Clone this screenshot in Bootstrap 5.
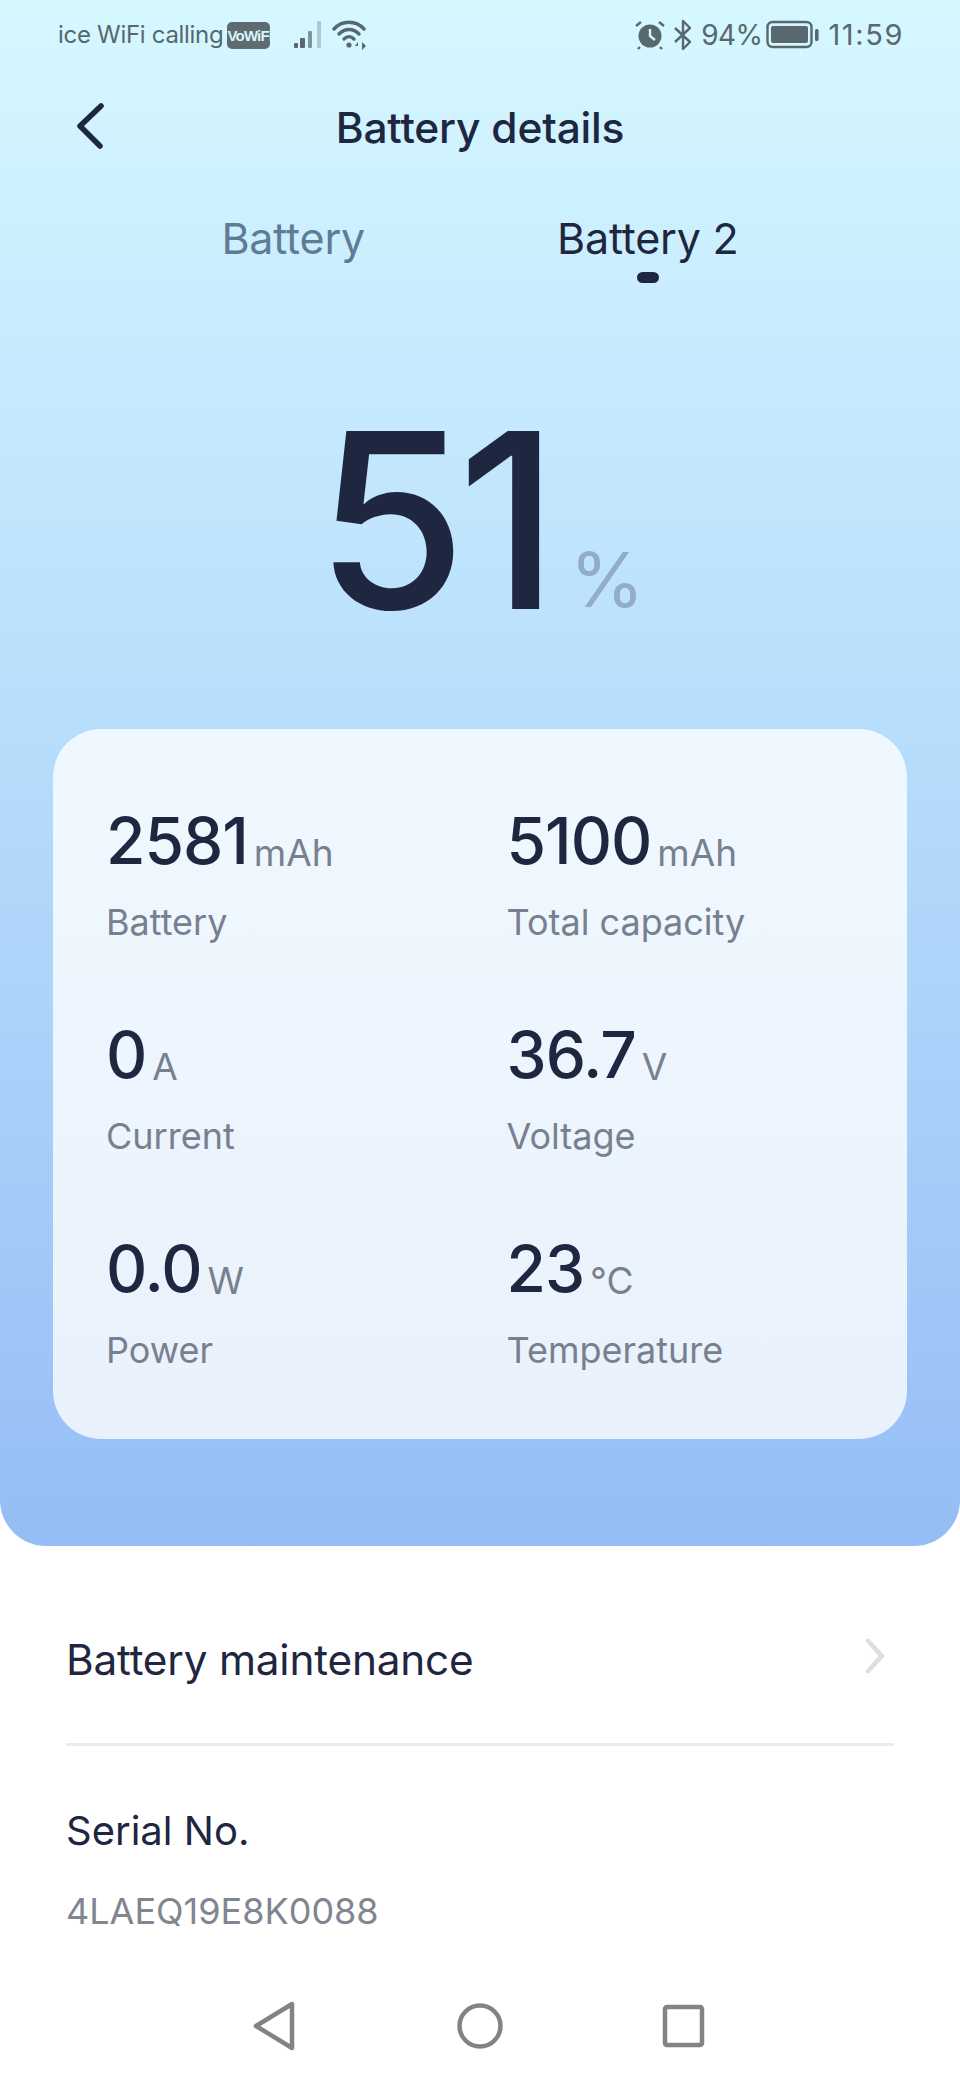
<!DOCTYPE html>
<html lang="en">
<head>
    <meta charset="UTF-8">
    <meta name="viewport" content="width=device-width, initial-scale=1.0">
    <title>Battery details</title>
    <link rel="stylesheet" href="https://cdn.jsdelivr.net/npm/bootstrap@5.3.0/dist/css/bootstrap.min.css">
    <style>
        body {
            font-family: Inter, "Noto Sans", sans-serif;
            background: #fff;
            color: #1e2640;
            width: 960px;
            height: 2080px;
            overflow: hidden;
        }
        .hero {
            height: 1546px;
            padding: 0 53px;
            background: linear-gradient(180deg, #d6f8ff 0%, #c6eafe 25%, #b5dcfb 50%, #a6cdf8 75%, #94bdf5 100%);
            border-radius: 0 0 46px 46px;
        }
        .status-bar {
            height: 70px;
            padding: 0 3px 0 5px;
            color: #58686e;
            font-size: 24px;
            letter-spacing: -.3px;
        }
        .status-big { font-size: 28px; letter-spacing: -.6px; }
        .status-time { font-size: 29px; letter-spacing: 1.6px; }
        .vowifi {
            background: #5e6b70;
            color: #d8f5fc;
            font: 700 15px/27px "Liberation Sans Narrow", "Liberation Sans", sans-serif;
            width: 43px;
            height: 27px;
            border-radius: 5px;
            text-align: center;
            letter-spacing: -.8px;
        }
        .title-bar { height: 118px; padding-bottom: 3px; }
        .title-bar h1 { font-size: 42.5px; font-weight: 500; margin: 0; letter-spacing: -.2px; }
        .back-btn { position: absolute; left: 22px; top: 33px; }
        .tabs { height: 100px; gap: 192px; }
        .tab-item { font-size: 43px; color: #5f7c96; position: relative; letter-spacing: -.2px; }
        .tab-item.active { color: #1e2640; }
        .tab-item.active::after {
            content: "";
            position: absolute;
            left: 50%;
            bottom: -13px;
            width: 22px;
            height: 11px;
            margin-left: -11px;
            border-radius: 6px;
            background: #1e2640;
        }
        .level { height: 441px; padding-bottom: 86px; }
        .level-num { font-size: 244px; font-weight: 450; line-height: 1; letter-spacing: -9px; }
        .level-unit { font-size: 76px; color: #93adc6; line-height: 1; margin-left: 20px; margin-bottom: 26px; }
        .stat-card {
            height: 710px;
            margin: 0;
            padding: 74px 0 0 53px;
            border: 0;
            border-radius: 48px;
            background: linear-gradient(180deg, #f0f8ff, #e9f2fc);
        }
        .stat-cell { height: 214px; }
        .stat-val { font-size: 64px; font-weight: 500; line-height: 76px; letter-spacing: -1px; }
        .stat-unit { font-size: 37px; font-weight: 400; color: #78808f; margin-left: 6px; letter-spacing: 0; position: relative; top: 2px; }
        .stat-label { font-size: 36px; line-height: 44px; color: #78808f; margin-top: 11px; }
        .info-list { padding: 0 66px; }
        .info-row { height: 200px; padding-top: 30px; border-bottom: 3px solid #e8eaec; font-size: 42.3px; letter-spacing: -.2px; }
        .serial { padding-top: 57px; }
        .serial-name { font-size: 40px; line-height: 56px; }
        .serial-no { font-size: 36px; line-height: 44px; color: #808590; margin-top: 30px; }
        .nav-bar { position: absolute; left: 0; right: 0; bottom: 28px; height: 52px; }
    </style>
</head>
<body>

    <div class="hero position-relative">
        <!-- status bar -->
        <div class="status-bar d-flex align-items-center justify-content-between">
            <div class="d-flex align-items-center">
                <span>ice WiFi calling</span>
                <span class="vowifi ms-1">VoWiFi</span>
                <svg class="ms-4" width="30" height="28" viewBox="0 0 30 28">
                    <rect x="0" y="22" width="4" height="5" rx="1" fill="#58686e"/>
                    <rect x="6" y="17" width="5" height="10" rx="1" fill="#58686e"/>
                    <rect x="14" y="10" width="4" height="17" rx="1" fill="#7f959d"/>
                    <rect x="23" y="0" width="4" height="27" rx="1" fill="#b0c8d0"/>
                </svg>
                <svg class="ms-2" width="36" height="30" viewBox="0 0 36 30" fill="none" stroke="#58686e" stroke-width="3.4" stroke-linecap="round">
                    <path d="M2 9C10 0 24 0 32 9"/>
                    <path d="M7 14C13 8 21 8 27 14"/>
                    <path d="M12 19C15 16 19 16 22 19"/>
                    <circle cx="17" cy="25" r="2.6" fill="#58686e" stroke="none"/>
                    <path d="M26 22l-3 4h3zM30 22v8l4-4z" fill="#58686e" stroke="none"/>
                </svg>
            </div>
            <div class="d-flex align-items-center">
                <svg width="30" height="30" viewBox="0 0 30 30">
                    <circle cx="15" cy="16" r="11.5" fill="#58686e"/>
                    <path d="M15 9v7l5 4" fill="none" stroke="#d4f5fd" stroke-width="2.4"/>
                    <path d="M1 6l5-4M29 6l-5-4M5 27l-2 2M25 27l2 2" stroke="#58686e" stroke-width="2.4"/>
                </svg>
                <svg class="ms-2" width="20" height="32" viewBox="0 0 20 32" fill="none" stroke="#58686e" stroke-width="2.4" stroke-linejoin="round">
                    <path d="M2 9l15 14-7 7V2l7 7L2 23"/>
                </svg>
                <span class="status-big ms-2">94%</span>
                <svg class="ms-1" width="54" height="30" viewBox="0 0 54 30">
                    <rect x="1.5" y="2" width="44" height="25" rx="5" fill="none" stroke="#58686e" stroke-width="2.4"/>
                    <rect x="5" y="6" width="37" height="17" rx="2" fill="#58686e"/>
                    <rect x="49" y="9" width="3.6" height="12" rx="1.6" fill="#58686e"/>
                </svg>
                <span class="status-time ms-2">11:59</span>
            </div>
        </div>

        <!-- title -->
        <div class="title-bar position-relative d-flex align-items-center justify-content-center">
            <svg class="back-btn" width="30" height="46" viewBox="0 0 30 46" fill="none" stroke="#1e2640" stroke-width="5.5" stroke-linecap="round" stroke-linejoin="round">
                <path d="M26 3L5 23l20 20"/>
            </svg>
            <h1>Battery details</h1>
        </div>

        <!-- tabs -->
        <div class="tabs d-flex align-items-center justify-content-center">
            <span class="tab-item">Battery</span>
            <span class="tab-item active">Battery 2</span>
        </div>

        <!-- level -->
        <div class="level d-flex justify-content-center align-items-end">
            <span class="level-num">51</span>
            <span class="level-unit">%</span>
        </div>

        <!-- stats -->
        <div class="card stat-card">
            <div class="row g-0">
                <div class="col-6 stat-cell">
                    <div class="stat-val">2581<span class="stat-unit">mAh</span></div>
                    <div class="stat-label">Battery</div>
                </div>
                <div class="col-6 stat-cell">
                    <div class="stat-val">5100<span class="stat-unit">mAh</span></div>
                    <div class="stat-label">Total capacity</div>
                </div>
                <div class="col-6 stat-cell">
                    <div class="stat-val">0<span class="stat-unit">A</span></div>
                    <div class="stat-label">Current</div>
                </div>
                <div class="col-6 stat-cell">
                    <div class="stat-val">36.7<span class="stat-unit">V</span></div>
                    <div class="stat-label">Voltage</div>
                </div>
                <div class="col-6 stat-cell">
                    <div class="stat-val">0.0<span class="stat-unit">W</span></div>
                    <div class="stat-label">Power</div>
                </div>
                <div class="col-6 stat-cell">
                    <div class="stat-val">23<span class="stat-unit">°C</span></div>
                    <div class="stat-label">Temperature</div>
                </div>
            </div>
        </div>
    </div>

    <div class="info-list">
        <div class="info-row d-flex align-items-center justify-content-between">
            <span>Battery maintenance</span>
            <svg class="me-2 mb-2" width="22" height="36" viewBox="0 0 22 36" fill="none" stroke="#dcdee2" stroke-width="4.5" stroke-linecap="round" stroke-linejoin="round">
                <path d="M4 3l14 15L4 33"/>
            </svg>
        </div>
        <div class="serial">
            <div class="serial-name">Serial No.</div>
            <div class="serial-no">4LAEQ19E8K0088</div>
        </div>
    </div>

    <!-- system nav -->
    <div class="nav-bar d-flex justify-content-center">
        <svg width="960" height="52" viewBox="0 0 960 52" fill="none" stroke="#838383" stroke-width="4.5" stroke-linejoin="round">
            <path d="M292 4v44L256 26z"/>
            <circle cx="480" cy="26" r="20.5"/>
            <rect x="665" y="7" width="37" height="38" rx="2"/>
        </svg>
    </div>

    <script src="https://cdn.jsdelivr.net/npm/bootstrap@5.3.0/dist/js/bootstrap.bundle.min.js"></script>
</body>
</html>
